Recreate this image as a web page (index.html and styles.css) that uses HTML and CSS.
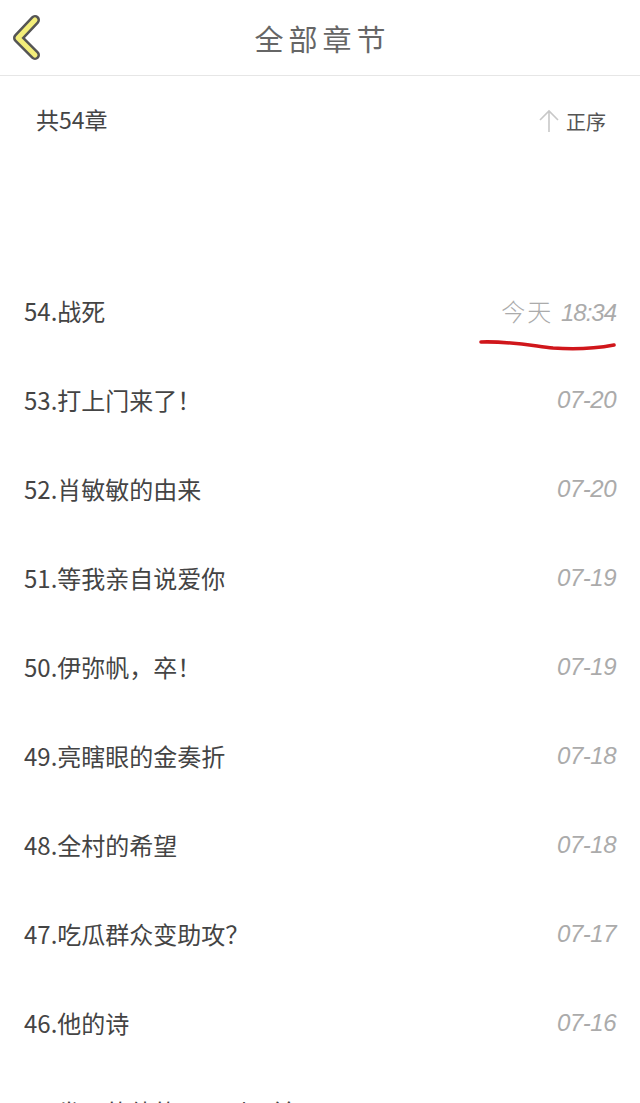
FILE: index.html
```html
<!DOCTYPE html>
<html lang="zh-CN">
<head>
    <meta charset="UTF-8">
    <meta name="viewport" content="width=device-width, initial-scale=1.0">
    <title>全部章节</title>
    <link rel="stylesheet" href="styles.css">
</head>
<body>
    <div class="header">
        <div class="back">
            <svg width="34" height="46" viewBox="0 0 34 46">
                <path d="M26 6 L9 24 L26 41" fill="none" stroke="#555" stroke-width="10" stroke-linecap="round" stroke-linejoin="round"/>
                <path d="M26 6 L9 24 L26 41" fill="none" stroke="#f3ee7a" stroke-width="5" stroke-linecap="round" stroke-linejoin="round"/>
            </svg>
        </div>
        <h1>全部章节</h1>
    </div>

    <div class="summary">
        <span class="count">共54章</span>
        <span class="order">
            <svg width="22" height="26" viewBox="0 0 22 26">
                <path d="M11 24 V3 M2 12 L11 3 L20 12" fill="none" stroke="#c8c8c8" stroke-width="1.6"/>
            </svg>
            正序
        </span>
    </div>

    <ul class="chapters">
        <li class="chapter">
            <span class="name">54.战死</span>
            <span class="date marked"><span class="day">今天</span> 18:34
                <svg class="mark" width="140" height="16" viewBox="0 0 140 16">
                    <path d="M3 4 C30 3 50 7 75 10 C100 12 120 10 136 7" fill="none" stroke="#d0161b" stroke-width="3.6" stroke-linecap="round"/>
                </svg>
            </span>
        </li>
        <li class="chapter"><span class="name">53.打上门来了！</span><span class="date">07-20</span></li>
        <li class="chapter"><span class="name">52.肖敏敏的由来</span><span class="date">07-20</span></li>
        <li class="chapter"><span class="name">51.等我亲自说爱你</span><span class="date">07-19</span></li>
        <li class="chapter"><span class="name">50.伊弥帆，卒！</span><span class="date">07-19</span></li>
        <li class="chapter"><span class="name">49.亮瞎眼的金奏折</span><span class="date">07-18</span></li>
        <li class="chapter"><span class="name">48.全村的希望</span><span class="date">07-18</span></li>
        <li class="chapter"><span class="name">47.吃瓜群众变助攻？</span><span class="date">07-17</span></li>
        <li class="chapter"><span class="name">46.他的诗</span><span class="date">07-16</span></li>
        <li class="chapter"><span class="name">45.发现的他的ABC到面前</span><span class="date">07-16</span></li>
    </ul>
</body>
</html>
```

FILE: styles.css
```css
body {
    margin: 0;
    background: #fff;
    font-family: "Noto Sans CJK SC", "Noto Sans", sans-serif;
    color: #444;
    overflow: hidden;
    height: 1103px;
}
.header {
    height: 75px;
    border-bottom: 1.5px solid #e6e6e6;
    display: flex;
    align-items: center;
    justify-content: center;
    position: relative;
}
.back {
    position: absolute;
    left: 9px;
    top: 14px;
}
.header h1 {
    margin: 0;
    font-size: 29px;
    font-weight: 400;
    letter-spacing: 5px;
    color: #666;
    padding-left: 5px;
}
.summary {
    height: 88px;
    padding: 0 34px 0 36px;
    display: flex;
    justify-content: space-between;
    align-items: center;
    margin-top: 1px;
    margin-bottom: 101px;
}
.count {
    font-size: 23px;
    color: #444;
    margin-top: -4px;
}
.order {
    display: flex;
    align-items: center;
    gap: 6px;
    font-size: 20px;
    color: #555;
}
.chapters {
    list-style: none;
    margin: 0;
    padding: 0;
}
.chapter {
    height: 89px;
    display: flex;
    align-items: center;
    justify-content: space-between;
    padding: 0 24px;
}
.name {
    font-size: 24px;
    color: #444;
}
.date {
    font-family: "Liberation Sans", "Noto Sans CJK SC", sans-serif;
    font-style: italic;
    font-size: 24px;
    color: #ababab;
    letter-spacing: -0.5px;
}
.marked {
    position: relative;
    word-spacing: 2px;
    letter-spacing: -1px;
}
.day {
    font-family: "Noto Sans CJK SC", sans-serif;
    font-style: normal;
    font-weight: 300;
    letter-spacing: 2px;
}
.mark {
    position: absolute;
    right: -2px;
    top: 45px;
}
```
